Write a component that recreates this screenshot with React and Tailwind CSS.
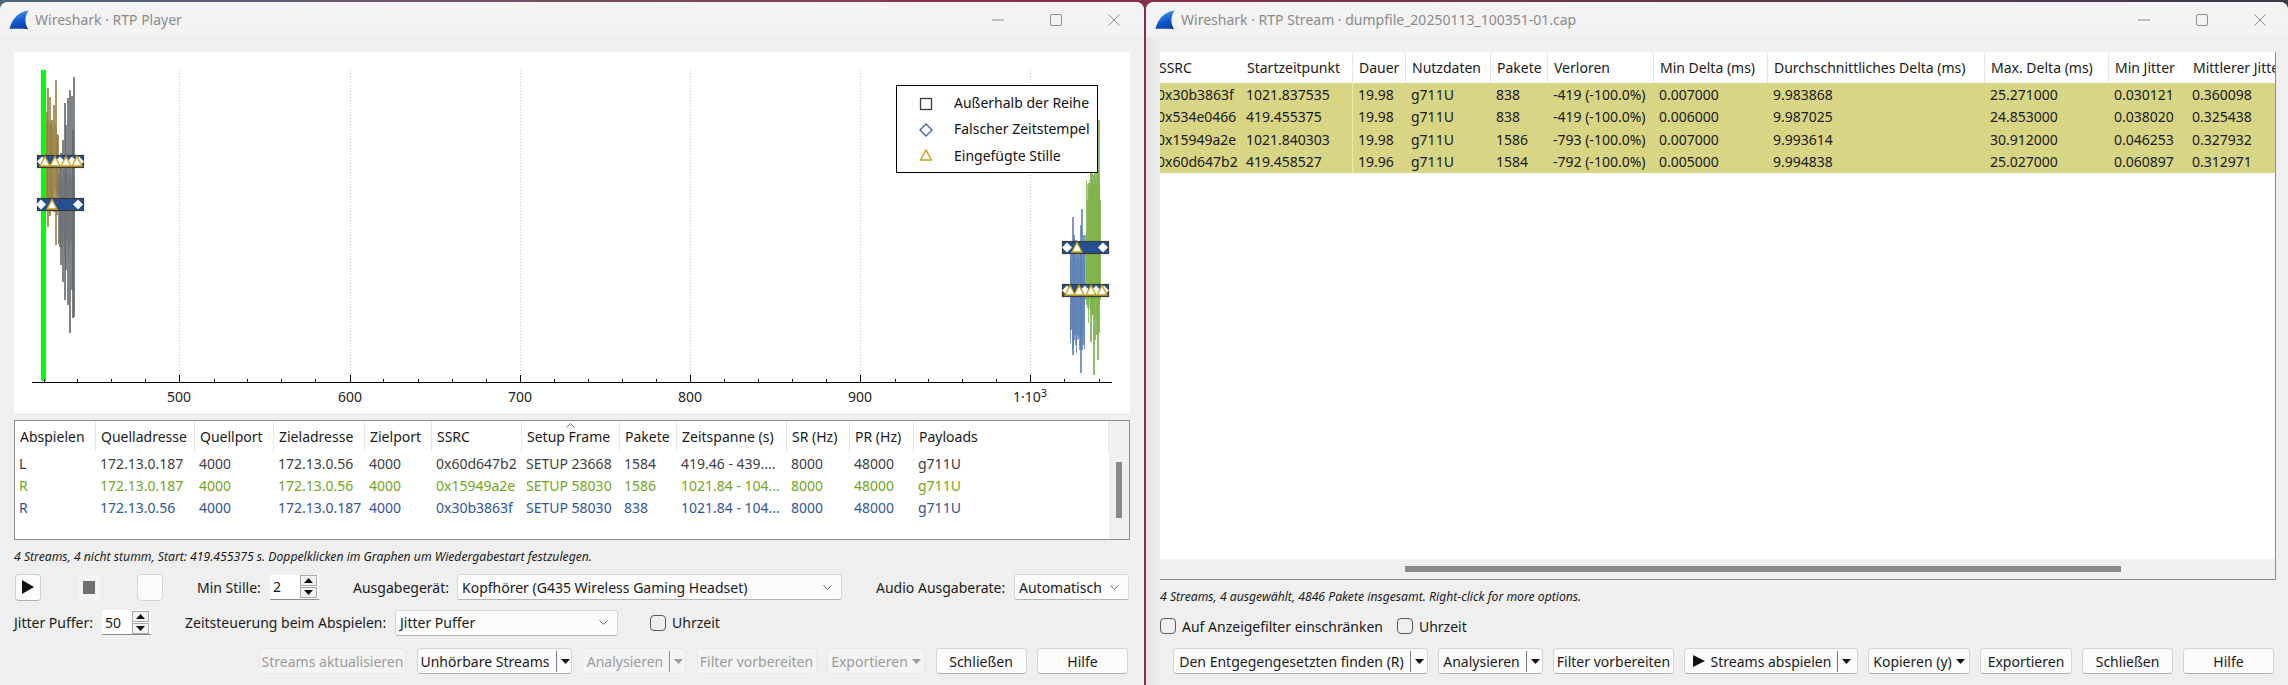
import { ChevronDown } from "lucide-react";

/* ---------------- WAVEFORM DATA [x, top, bottom] in page pixels ---------------- */
const BROWN = [
  [46, 112, 200], [47, 88, 227], [49, 97, 216], [50, 122, 200], [51, 120, 205], [53, 105, 212], [55, 80, 245], [56, 134, 215], [57, 135, 196],
];
const GRAY = [
  [59, 167, 247], [60, 153, 265], [62, 140, 282], [64, 103, 300], [65, 125, 270], [67, 98, 305], [69, 90, 333], [71, 96, 290], [72, 130, 318], [73, 77, 317],
];
const BLUE = [
  [1070, 250, 330], [1072, 217, 355], [1073, 235, 340], [1075, 240, 345], [1077, 255, 335], [1079, 245, 350], [1080, 225, 373], [1081, 209, 350], [1083, 235, 345],
];
const GREEN = [
  [1085, 235, 300], [1087, 200, 308], [1088, 183, 300], [1090, 172, 342], [1091, 170, 315], [1093, 175, 375], [1094, 165, 340], [1096, 165, 335], [1097, 170, 360], [1098, 120, 333], [1099, 200, 300],
];

const TICKS = [44, 77, 111, 145, 179, 214, 247, 281, 315, 350, 383, 418, 452, 486, 520, 554, 588, 622, 656, 690, 724, 758, 792, 826, 860, 895, 928, 962, 996, 1030, 1064, 1099];
const MAJOR = [179, 350, 520, 690, 860, 1030];

function Diamond({ x, y }) {
  return <polygon points={`${x - 5},${y} ${x},${y - 5} ${x + 5},${y} ${x},${y + 5}`} fill="#fff" />;
}

function Triangle({ x, y }) {
  return <polygon points={`${x - 5},${y + 4.5} ${x},${y - 5} ${x + 5},${y + 4.5}`} fill="#fff" stroke="#c9a20f" strokeWidth="1.3" />;
}

function Band({ x, y, diamonds, triangles }) {
  return (
    <g>
      <rect x={x + 0.5} y={y + 0.5} width="46" height="12" fill="#26508f" stroke="#3a3a3a" strokeWidth="1.2" />
      {diamonds.map((d) => <Diamond key={d} x={d} y={y + 6.5} />)}
      {triangles.map((t) => <Triangle key={t} x={t} y={y + 6.5} />)}
    </g>
  );
}

function Bars({ data, color, opacity }) {
  return data.map(([x, top, bottom]) => (
    <rect key={x} x={x} y={top} width="2" height={bottom - top} fill={color} opacity={opacity} />
  ));
}

// dense middle of a wave form, one pixel columns with changing strength
function Body({ from, to, top, bottom, color }) {
  const cols = [];
  for (let x = from; x < to; x++) cols.push(x);
  return cols.map((x) => (
    <rect key={x} x={x} y={top + (x % 3) * 4} width="1" height={bottom - top - (x % 4) * 5} fill={color} opacity={x % 2 ? 0.62 : 0.82} />
  ));
}

function Plot() {
  return (
    <div className="relative h-[361px] w-[1116px] bg-white">
      <svg viewBox="14 52 1116 361" className="block h-full w-full">
        {MAJOR.map((x) => (
          <line key={x} x1={x + 0.5} x2={x + 0.5} y1="70" y2="375" stroke="#c4c4c4" strokeDasharray="1 2" />
        ))}
        <rect x="41" y="70" width="5" height="311" fill="#00ff00" />
        <Bars data={BROWN} color="#8c7433" opacity="0.75" />
        <Bars data={GRAY} color="#5f6468" opacity="0.8" />
        <Body from={58} to={75} top={170} bottom={250} color="#6b7074" />
        <Body from={46} to={57} top={120} bottom={200} color="#9a8448" />
        <Bars data={BLUE} color="#5b7fb3" opacity="0.8" />
        <Bars data={GREEN} color="#7db24a" opacity="0.85" />
        <Body from={1070} to={1085} top={250} bottom={345} color="#5b7fb3" />
        <Body from={1086} to={1100} top={180} bottom={315} color="#7db24a" />
        <Band x={37} y={155} diamonds={[42, 60, 72, 79]} triangles={[45, 55, 66, 77]} />
        <Band x={37} y={198} diamonds={[41, 78]} triangles={[52]} />
        <Band x={1062} y={241} diamonds={[1067, 1103]} triangles={[1077]} />
        <Band x={1062} y={284} diamonds={[1067, 1085, 1096, 1104]} triangles={[1070, 1079, 1091, 1102]} />
        <line x1="32" x2="1112" y1="382.5" y2="382.5" stroke="#000" />
        {TICKS.map((x) => (
          <line key={x} x1={x + 0.5} x2={x + 0.5} y1={MAJOR.includes(x) ? 375 : 379} y2="382" stroke="#000" />
        ))}
        <g fontFamily="'Noto Sans', sans-serif" fontSize="14" fill="#222" textAnchor="middle">
          <text x="179" y="402">500</text>
          <text x="350" y="402">600</text>
          <text x="520" y="402">700</text>
          <text x="690" y="402">800</text>
          <text x="860" y="402">900</text>
          <text x="1030" y="402">
            1·10<tspan dy="-5" fontSize="11">3</tspan>
          </text>
        </g>
      </svg>

      {/* LEGEND */}
      <div className="absolute left-[882px] top-[33px] flex h-[88px] w-[202px] flex-col justify-center gap-[4.5px] border border-black bg-white pl-[57px] text-[14px] text-[#111]">
        <span className="leading-[22px]">Außerhalb der Reihe</span>
        <span className="leading-[22px]">Falscher Zeitstempel</span>
        <span className="leading-[22px]">Eingefügte Stille</span>
        <svg className="absolute left-[22px] top-[10px]" width="14" height="66" viewBox="0 0 14 66">
          <rect x="1.5" y="2.5" width="11" height="11" fill="none" stroke="#3a3a3a" strokeWidth="1.3" />
          <polygon points="1,34 7,28 13,34 7,40" fill="none" stroke="#3f65a6" strokeWidth="1.4" />
          <polygon points="1.5,64 7,54 12.5,64" fill="none" stroke="#c9a20f" strokeWidth="1.4" />
        </svg>
      </div>
    </div>
  );
}

/* ---------------- WINDOW CHROME ---------------- */
function SharkLogo() {
  return (
    <svg width="20" height="20" viewBox="0 0 20 20" className="shrink-0">
      <defs>
        <linearGradient id="fin" x1="0.3" y1="0" x2="0.6" y2="1">
          <stop offset="0" stopColor="#3f9bf0" />
          <stop offset="0.6" stopColor="#1259d0" />
          <stop offset="1" stopColor="#0a3da0" />
        </linearGradient>
      </defs>
      <path d="M19.5 0.5C10 2 3 8 0.5 19C5 18.7 14 18.7 19 19.2C15.5 13 15.5 6.5 19.5 0.5Z" fill="url(#fin)" />
    </svg>
  );
}

function TitleBar({ title, className }) {
  return (
    <div className={`flex h-[36px] shrink-0 items-center rounded-t-lg bg-gradient-to-b from-[#f3f3f3] from-80% to-[#efefef] pb-[1px] ${className}`}>
      <SharkLogo />
      <span className="ml-[6px] text-[14px] text-[#8a8a8a]">{title}</span>
      <div className="ml-auto flex items-center gap-[46px]">
        <svg width="12" height="12" viewBox="0 0 12 12"><path d="M0 6H12" stroke="#8f8f8f" /></svg>
        <svg width="12" height="12" viewBox="0 0 12 12"><rect x="0.5" y="0.5" width="11" height="11" rx="1.5" fill="none" stroke="#8f8f8f" /></svg>
        <svg width="12" height="12" viewBox="0 0 12 12"><path d="M0.5 0.5L11.5 11.5M11.5 0.5L0.5 11.5" stroke="#8f8f8f" /></svg>
      </div>
    </div>
  );
}

/* ---------------- SMALL WIDGETS ---------------- */
function Arrow({ disabled }) {
  return (
    <svg width="9" height="5" viewBox="0 0 9 5" className="shrink-0">
      <polygon points="0,0 9,0 4.5,5" fill={disabled ? "#9a9a9a" : "#111"} />
    </svg>
  );
}

function Button({ label, className, disabled, split, menu, icon }) {
  return (
    <div
      className={`flex h-[26px] shrink-0 items-center justify-center rounded-[4px] border text-[14px] ${disabled
          ? "border-[#e8e8e8] bg-[#f4f4f4] text-[#9b9b9b]"
          : "border-[#d4d4d4] border-b-[#b0b0b0] bg-[#fcfcfc] text-[#1a1a1a]"
        } ${className}`}
    >
      {icon && <svg width="12" height="12" viewBox="0 0 12 12" className="mr-[6px]"><polygon points="0,0 12,6 0,12" fill="#111" /></svg>}
      <span className="whitespace-nowrap">{label}</span>
      {menu && <span className="ml-[4px]"><Arrow disabled={disabled} /></span>}
      {split && (
        <>
          <span className={`ml-[6px] h-[21px] w-[1px] ${disabled ? "bg-[#8f8f8f]" : "bg-[#7a7a7a]"}`} />
          <span className="ml-[4px] mr-[-2px]"><Arrow disabled={disabled} /></span>
        </>
      )}
    </div>
  );
}

function Check({ label, className }) {
  return (
    <div className={`flex items-center gap-[6px] ${className}`}>
      <span className="h-[16px] w-[16px] rounded-[4px] border border-[#5a5a5a]" />
      <span className="text-[14px] text-[#1a1a1a]">{label}</span>
    </div>
  );
}

function Spin({ value, className }) {
  return (
    <div className={`flex h-[25px] w-[49px] items-center border-b border-b-[#8a8a8a] bg-white pl-[3px] pr-[2px] text-[14px] text-[#1a1a1a] ${className}`}>
      <span>{value}</span>
      <div className="ml-auto flex flex-col gap-[1px]">
        <span className="flex h-[11px] w-[17px] items-center justify-center border border-[#a8a8a8] bg-[#f4f4f4]">
          <svg width="9" height="5" viewBox="0 0 9 5"><polygon points="0,5 9,5 4.5,0" fill="#111" /></svg>
        </span>
        <span className="flex h-[11px] w-[17px] items-center justify-center border border-[#a8a8a8] bg-[#f4f4f4]">
          <Arrow />
        </span>
      </div>
    </div>
  );
}

function Combo({ label, className }) {
  return (
    <div className={`flex h-[26px] items-center rounded-[3px] border border-[#d8d8d8] border-b-[#b4b4b4] bg-[#fcfcfc] pl-[4px] pr-[6px] text-[14px] text-[#1a1a1a] ${className}`}>
      <span className="whitespace-nowrap">{label}</span>
      <ChevronDown size={15} strokeWidth={1.2} className="ml-auto text-[#333]" />
    </div>
  );
}

function IconButton({ className, children }) {
  return (
    <div className={`flex h-[27px] w-[26px] shrink-0 items-center justify-center rounded-[4px] border ${className}`}>
      {children}
    </div>
  );
}

/* ---------------- PLAYER TABLE ---------------- */
const PLAYER_HEAD = ["Abspielen", "Quelladresse", "Quellport", "Zieladresse", "Zielport", "SSRC", "Setup Frame", "Pakete", "Zeitspanne (s)", "SR (Hz)", "PR (Hz)", "Payloads"];
const PLAYER_ROWS = [
  { color: "text-[#404040]", cells: ["L", "172.13.0.187", "4000", "172.13.0.56", "4000", "0x60d647b2", "SETUP 23668", "1584", "419.46 - 439....", "8000", "48000", "g711U"] },
  { color: "text-[#72a51c]", cells: ["R", "172.13.0.187", "4000", "172.13.0.56", "4000", "0x15949a2e", "SETUP 58030", "1586", "1021.84 - 104...", "8000", "48000", "g711U"] },
  { color: "text-[#2f5597]", cells: ["R", "172.13.0.56", "4000", "172.13.0.187", "4000", "0x30b3863f", "SETUP 58030", "838", "1021.84 - 104...", "8000", "48000", "g711U"] },
];
const PLAYER_COLS = "grid grid-cols-[81px_99px_79px_91px_67px_90px_98px_57px_110px_63px_64px_195px]";

function PlayerTable() {
  return (
    <div className="mt-[7px] flex h-[120px] w-[1116px] border border-[#8c8c8c] bg-white text-[14px]">
      <div className="min-w-0 flex-1">
        <div className={`${PLAYER_COLS} h-[31px] text-[#1a1a1a]`}>
          {PLAYER_HEAD.map((h) => (
            <div key={h} className="relative flex items-center overflow-hidden whitespace-nowrap border-r border-r-[#e6e6e6] pl-[5px]">
              {h}
              {h === "Setup Frame" && (
                <svg className="absolute left-[44px] top-[2px]" width="9" height="5" viewBox="0 0 9 5">
                  <path d="M0.5 4.5L4.5 0.5L8.5 4.5" fill="none" stroke="#777" />
                </svg>
              )}
            </div>
          ))}
        </div>
        {PLAYER_ROWS.map((row) => (
          <div key={row.cells[5]} className={`${PLAYER_COLS} h-[22px] ${row.color}`}>
            {row.cells.map((c, i) => (
              <div key={i} className="flex items-center overflow-hidden whitespace-nowrap pl-[4px]">{c}</div>
            ))}
          </div>
        ))}
      </div>
      <div className="w-[20px] shrink-0 bg-[#f0f0f0] pl-[7px] pt-[41px]">
        <div className="h-[56px] w-[6px] bg-[#8a8a8a]" />
      </div>
    </div>
  );
}

/* ---------------- STREAM TABLE ---------------- */
const STREAM_HEAD = ["SSRC", "Startzeitpunkt", "Dauer", "Nutzdaten", "Pakete", "Verloren", "Min Delta (ms)", "Durchschnittliches Delta (ms)", "Max. Delta (ms)", "Min Jitter", "Mittlerer Jitter"];
const STREAM_ROWS = [
  ["0x30b3863f", "1021.837535", "19.98", "g711U", "838", "-419 (-100.0%)", "0.007000", "9.983868", "25.271000", "0.030121", "0.360098"],
  ["0x534e0466", "419.455375", "19.98", "g711U", "838", "-419 (-100.0%)", "0.006000", "9.987025", "24.853000", "0.038020", "0.325438"],
  ["0x15949a2e", "1021.840303", "19.98", "g711U", "1586", "-793 (-100.0%)", "0.007000", "9.993614", "30.912000", "0.046253", "0.327932"],
  ["0x60d647b2", "419.458527", "19.96", "g711U", "1584", "-792 (-100.0%)", "0.005000", "9.994838", "25.027000", "0.060897", "0.312971"],
];
const STREAM_COLS = "grid grid-cols-[81px_112px_53px_85px_57px_106px_114px_217px_124px_78px_88px]";

function StreamTable() {
  return (
    <div className="flex h-[528px] w-[1116px] flex-col border-b border-r border-b-[#8c8c8c] border-r-[#8c8c8c] bg-white text-[14px] text-[#1a1a1a]">
      <div className="flex-1 overflow-hidden">
        <div className={`${STREAM_COLS} h-[31px]`}>
          {STREAM_HEAD.map((h, i) => (
            <div
              key={h}
              className={`flex items-center overflow-hidden whitespace-nowrap ${i === 0 ? "pl-0" : "pl-[6px]"} ${i === 0 || i === 9 || i === 10 ? "" : "border-r border-r-[#e6e6e6]"}`}
            >
              <span className={i === 0 ? "-ml-[1px]" : ""}>{h}</span>
            </div>
          ))}
        </div>
        {STREAM_ROWS.map((row) => (
          <div key={row[0]} className={`${STREAM_COLS} h-[22.5px] bg-[#d8d585]`}>
            {row.map((c, i) => (
              <div
                key={i}
                className={`flex items-center overflow-hidden whitespace-nowrap ${i === 0 ? "pl-0" : "pl-[5px]"} ${i === 1 ? "border-r border-r-[#eeeba8]" : ""}`}
              >
                <span className={i === 0 ? "-ml-[3px]" : ""}>{c}</span>
              </div>
            ))}
          </div>
        ))}
      </div>
      <div className="h-[20px] shrink-0 bg-[#f0f0f0] pl-[245px] pt-[7px]">
        <div className="h-[6px] w-[716px] bg-[#8a8a8a]" />
      </div>
    </div>
  );
}

export default function App() {
  return (
    <div className="flex h-[685px] w-[2288px] gap-[2px] overflow-hidden bg-gradient-to-r from-[#4a6878] via-[#8a2c50] via-45% to-[#3d3a4a] pt-[2px] font-['Noto_Sans',sans-serif]">
      {/* RTP PLAYER */}
      <div className="flex w-[1144px] shrink-0 flex-col rounded-t-lg bg-[#efefef]">
        <TitleBar title="Wireshark · RTP Player" className="pl-[9px] pr-[24px]" />
        <div className="flex flex-col px-[14px] pt-[14px]">
          <Plot />
          <PlayerTable />
          <div className="flex h-[34px] items-center whitespace-nowrap text-[12.2px] italic text-[#1a1a1a]">
            4 Streams, 4 nicht stumm, Start: 419.455375 s. Doppelklicken im Graphen um Wiedergabestart festzulegen.
          </div>

          <div className="flex h-[26px] items-center text-[14px] text-[#1a1a1a]">
            <IconButton className="ml-[1px] border-[#cfcfcf] border-b-[#b0b0b0] bg-[#fcfcfc]">
              <svg width="12" height="14" viewBox="0 0 12 14"><polygon points="0,0 12,7 0,14" fill="#111" /></svg>
            </IconButton>
            <IconButton className="ml-[35px] border-[#ebebeb] bg-[#f4f4f4]">
              <span className="h-[13px] w-[12px] bg-[#707070]" />
            </IconButton>
            <IconButton className="ml-[35px] border-[#d4d4d4] bg-[#fcfcfc]" />
            <span className="ml-[34px] w-[64px] whitespace-nowrap">Min Stille:</span>
            <Spin value="2" className="ml-[9px]" />
            <span className="ml-[34px] w-[95px] whitespace-nowrap">Ausgabegerät:</span>
            <Combo label="Kopfhörer (G435 Wireless Gaming Headset)" className="ml-[9px] w-[385px]" />
            <span className="ml-[34px] w-[129px] whitespace-nowrap">Audio Ausgaberate:</span>
            <Combo label="Automatisch" className="ml-[9px] w-[115px]" />
          </div>

          <div className="mt-[10px] flex h-[25px] items-center text-[14px] text-[#1a1a1a]">
            <span className="w-[78px] whitespace-nowrap">Jitter Puffer:</span>
            <Spin value="50" className="ml-[10px]" />
            <span className="ml-[34px] w-[202px] whitespace-nowrap">Zeitsteuerung beim Abspielen:</span>
            <Combo label="Jitter Puffer" className="ml-[8px] w-[223px]" />
            <Check label="Uhrzeit" className="ml-[32px]" />
          </div>

          <div className="mt-[13px] flex justify-end gap-[10.5px] pr-[2px]">
            <Button label="Streams aktualisieren" disabled className="w-[147px]" />
            <Button label="Unhörbare Streams" split className="w-[155px]" />
            <Button label="Analysieren" disabled split className="w-[104px]" />
            <Button label="Filter vorbereiten" disabled className="w-[120px]" />
            <Button label="Exportieren" disabled menu className="w-[98px]" />
            <Button label="Schließen" className="w-[91px]" />
            <Button label="Hilfe" className="w-[91px]" />
          </div>
        </div>
      </div>

      {/* RTP STREAM */}
      <div className="flex min-w-0 flex-1 flex-col rounded-t-lg bg-[#efefef]">
        <TitleBar title="Wireshark · RTP Stream · dumpfile_20250113_100351-01.cap" className="pl-[9px] pr-[22px]" />
        <div className="flex flex-1 flex-col bg-[linear-gradient(to_right,#e4e4e4,#efefef_14px)] pl-[14px] pt-[14px]">
          <StreamTable />
          <div className="flex h-[34px] items-center whitespace-nowrap text-[12.2px] italic text-[#1a1a1a]">
            4 Streams, 4 ausgewählt, 4846 Pakete insgesamt. Right-click for more options.
          </div>
          <div className="flex h-[24px] items-center gap-[14px]">
            <Check label="Auf Anzeigefilter einschränken" />
            <Check label="Uhrzeit" />
          </div>
          <div className="mt-[10px] flex w-[1116px] justify-end gap-[10px] pr-[2px]">
            <Button label="Den Entgegengesetzten finden (R)" split className="w-[255px]" />
            <Button label="Analysieren" split className="w-[105px]" />
            <Button label="Filter vorbereiten" className="w-[121px]" />
            <Button label="Streams abspielen" icon split className="w-[174px]" />
            <Button label="Kopieren (y)" menu className="w-[102px]" />
            <Button label="Exportieren" className="w-[92px]" />
            <Button label="Schließen" className="w-[91px]" />
            <Button label="Hilfe" className="w-[91px]" />
          </div>
        </div>
      </div>
    </div>
  );
}
